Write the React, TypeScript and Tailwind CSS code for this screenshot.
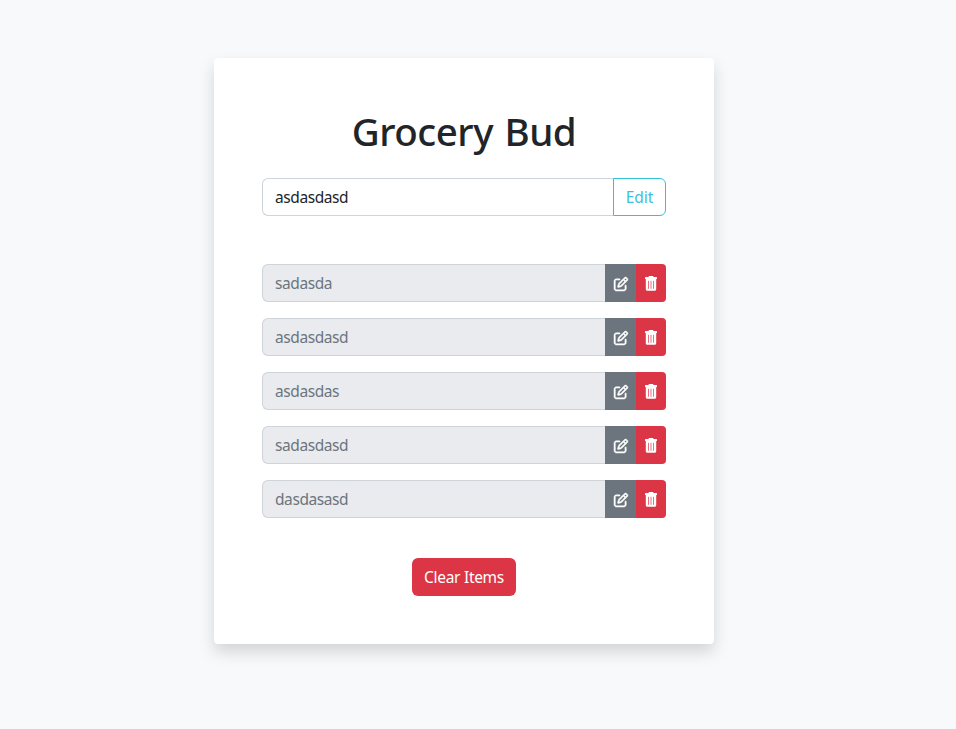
import { FaRegPenToSquare } from "react-icons/fa6";

const items = ["sadasda", "asdasdasd", "asdasdas", "sadasdasd", "dasdasasd"];

function TrashIcon() {
  return (
    <svg width="12" height="15" viewBox="0 0 12 15" fill="none">
      <path d="M0 1.6C0 1.2.3.9.7.9h2.7L4 0h4l.6.9h2.7c.4 0 .7.3.7.7v1.3H0z" fill="currentColor" />
      <path d="M.8 2.7h10.4v10.6c0 .9-.6 1.5-1.5 1.5H2.3c-.9 0-1.5-.6-1.5-1.5z" fill="currentColor" />
      <path d="M3.5 5.2v7.2M6 5.2v7.2M8.5 5.2v7.2" stroke="#dc3545" strokeWidth="0.7" strokeLinecap="round" />
    </svg>
  );
}

export default function App() {
  return (
    <div className="flex h-[729px] justify-center bg-[#f8f9fb] pr-7 font-['Noto_Sans',sans-serif] text-[15.5px] tracking-[-0.42px] text-[#212529]">
      <main className="mt-[58px] h-[586px] w-[500px] rounded bg-white p-12 shadow-[0_8px_16px_rgba(0,0,0,0.15)]">
        <h1 className="mb-[23px] pt-px text-center text-[38.5px] leading-12 font-[550] tracking-[-0.5px] [word-spacing:2px]">Grocery Bud</h1>
        <div className="flex h-[38px]">
          <div className="flex grow items-center rounded-l-md border border-r-0 border-[#ced4da] px-3 pt-px">asdasdasd</div>
          <button className="w-[53px] rounded-r-md border border-[#2fc3d6] pt-px tracking-[-0.1px] text-[#3fbfe0]">Edit</button>
        </div>
        <div className="mt-12 flex flex-col gap-4">
          {items.map((t) => (
            <div key={t} className="flex h-[38px]">
              <div className="flex grow items-center rounded-l-md border border-r-0 border-[#ced4da] bg-[#e9ebee] px-3 pt-px text-[#6c757d]">{t}</div>
              <button className="flex w-[31px] items-center justify-center bg-[#6c757d] pt-0.5 pl-px text-white"><FaRegPenToSquare size={14} stroke="currentColor" strokeWidth={18} className="overflow-visible" /></button>
              <button className="flex w-[30px] items-center justify-center rounded-r bg-[#dc3545] pt-px text-white"><TrashIcon /></button>
            </div>
          ))}
        </div>
        <button className="mx-auto mt-10 block h-[38px] w-[104px] rounded-md bg-[#dc3545] pt-px tracking-[-0.3px] text-white">Clear Items</button>
      </main>
    </div>
  );
}
